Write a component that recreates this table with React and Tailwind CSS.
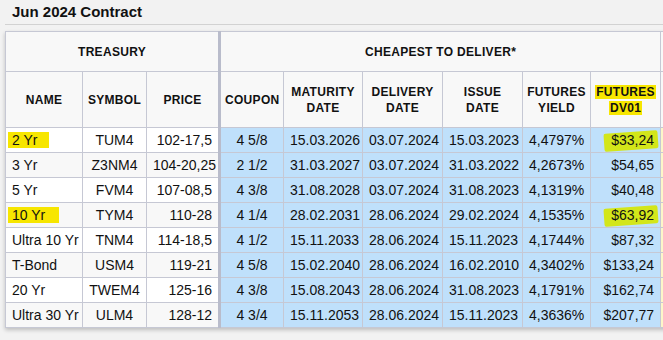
const rows = [
    { name: '2 Yr', symbol: 'TUM4', price: '102-17,5', coupon: '4 5/8', maturity: '15.03.2026', delivery: '03.07.2024', issue: '15.03.2023', yld: '4,4797%', dv01: '$33,24', hlName: true, hlDv: true },
    { name: '3 Yr', symbol: 'Z3NM4', price: '104-20,25', coupon: '2 1/2', maturity: '31.03.2027', delivery: '03.07.2024', issue: '31.03.2022', yld: '4,2673%', dv01: '$54,65' },
    { name: '5 Yr', symbol: 'FVM4', price: '107-08,5', coupon: '4 3/8', maturity: '31.08.2028', delivery: '03.07.2024', issue: '31.08.2023', yld: '4,1319%', dv01: '$40,48' },
    { name: '10 Yr', symbol: 'TYM4', price: '110-28', coupon: '4 1/4', maturity: '28.02.2031', delivery: '28.06.2024', issue: '29.02.2024', yld: '4,1535%', dv01: '$63,92', hlName: true, hlDv: true },
    { name: 'Ultra 10 Yr', symbol: 'TNM4', price: '114-18,5', coupon: '4 1/2', maturity: '15.11.2033', delivery: '28.06.2024', issue: '15.11.2023', yld: '4,1744%', dv01: '$87,32' },
    { name: 'T-Bond', symbol: 'USM4', price: '119-21', coupon: '4 5/8', maturity: '15.02.2040', delivery: '28.06.2024', issue: '16.02.2010', yld: '4,3402%', dv01: '$133,24' },
    { name: '20 Yr', symbol: 'TWEM4', price: '125-16', coupon: '4 3/8', maturity: '15.08.2043', delivery: '28.06.2024', issue: '31.08.2023', yld: '4,1791%', dv01: '$162,74' },
    { name: 'Ultra 30 Yr', symbol: 'ULM4', price: '128-12', coupon: '4 3/4', maturity: '15.11.2053', delivery: '28.06.2024', issue: '15.11.2023', yld: '4,3636%', dv01: '$207,77' },
]

const th = 'border border-[#c6c8d4] bg-[#f8f8f8] text-[12px] font-bold tracking-[0.3px] text-[#111] leading-[16px] text-center align-middle px-1'
const td = 'border border-[#c6c8d4] h-[25px] px-[6px] text-[14px] leading-[16px] text-[#111] align-middle whitespace-nowrap'
const blue = 'bg-[#bfe0fb]'

export default function App() {
    return (
        <div className="w-[663px] h-[340px] overflow-hidden bg-[#f2f2f2]" style={{ fontFamily: '"Liberation Sans", Arial, sans-serif' }}>
            <div className="ml-[5px] h-[25px] border-b border-[#d2d2d2] pl-[7px] pt-[4px] text-[15px] font-bold leading-[16px] text-[#111]">Jun 2024 Contract</div>
            <table className="ml-[5px] mt-[6px] table-fixed border-collapse w-[736px] shadow-[0_2px_4px_rgba(0,0,0,0.22)]">
                <colgroup>
                    <col className="w-[77px]" />
                    <col className="w-[64px]" />
                    <col className="w-[73px]" />
                    <col className="w-[64px]" />
                    <col className="w-[79px]" />
                    <col className="w-[80px]" />
                    <col className="w-[80px]" />
                    <col className="w-[68px]" />
                    <col className="w-[70px]" />
                    <col className="w-[81px]" />
                </colgroup>
                <thead>
                    <tr className="h-[40px]">
                        <th colSpan={3} className={`${th} border-r-[3px] border-r-[#b9bccb]`}>TREASURY</th>
                        <th colSpan={6} className={th}>CHEAPEST TO DELIVER*</th>
                        <th className={th}></th>
                    </tr>
                    <tr className="h-[56px]">
                        <th className={th}>NAME</th>
                        <th className={th}>SYMBOL</th>
                        <th className={`${th} border-r-[3px] border-r-[#b9bccb]`}>PRICE</th>
                        <th className={th}>COUPON</th>
                        <th className={th}>MATURITY<br />DATE</th>
                        <th className={th}>DELIVERY<br />DATE</th>
                        <th className={th}>ISSUE<br />DATE</th>
                        <th className={th}>FUTURES<br />YIELD</th>
                        <th className={th}>
                            <span className="bg-[#f7e600] px-[1px] [box-decoration-break:clone]">FUTURES</span>
                            <br />
                            <span className="bg-[#f7e600] px-[1px]">DV01</span>
                        </th>
                        <th className={th}></th>
                    </tr>
                </thead>
                <tbody>
                    {rows.map((r, i) => {
                        const rowBg = i % 2 === 0 ? 'bg-white' : 'bg-[#f8f8f8]'
                        return (
                            <tr key={r.symbol}>
                                <td className={`${td} ${rowBg} text-left`}>
                                    {r.hlName
                                        ? <span className={`-ml-[4px] inline-block bg-[#f7e600] pl-[4px] ${i === 0 ? 'pr-[12px]' : 'pr-[14px]'}`}>{r.name}</span>
                                        : r.name}
                                </td>
                                <td className={`${td} ${rowBg} text-center`}>{r.symbol}</td>
                                <td className={`${td} ${rowBg} text-right border-r-[3px] border-r-[#b9bccb]`}>{r.price}</td>
                                <td className={`${td} ${blue} text-center`}>{r.coupon}</td>
                                <td className={`${td} ${blue} text-center`}>{r.maturity}</td>
                                <td className={`${td} ${blue} text-center`}>{r.delivery}</td>
                                <td className={`${td} ${blue} text-center`}>{r.issue}</td>
                                <td className={`${td} ${blue} text-right`}>{r.yld}</td>
                                <td className={`${td} ${blue} text-right`}>
                                    {r.hlDv
                                        ? <span className="relative inline-block">
                                            <span className="absolute -left-[7px] -right-[4px] top-[0px] bottom-[-2px] -rotate-[4deg] rounded-[2px] bg-[#d3e61a]" />
                                            <span className="relative">{r.dv01}</span>
                                        </span>
                                        : r.dv01}
                                </td>
                                <td className={`${td} bg-[#fdf6c9]`}></td>
                            </tr>
                        )
                    })}
                </tbody>
            </table>
        </div>
    )
}
